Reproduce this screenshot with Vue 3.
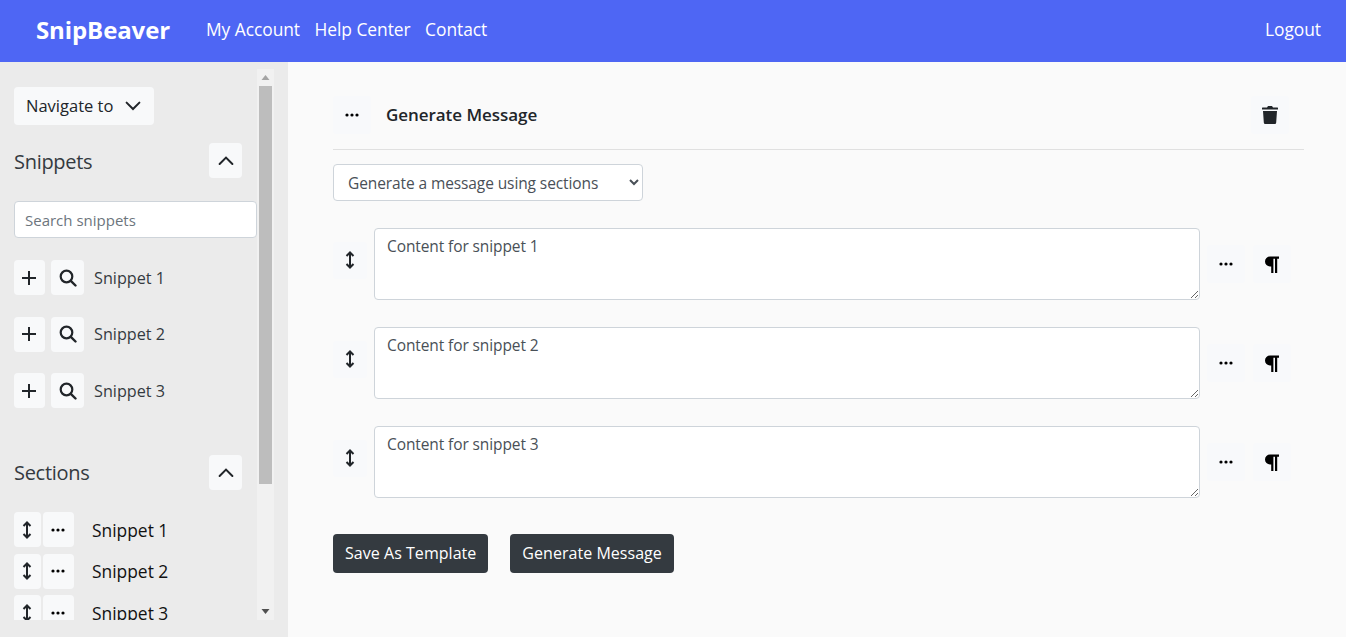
<script setup>
const snippets = ['Snippet 1', 'Snippet 2', 'Snippet 3']
</script>

<template>
  <div class="page">
    <header class="nav">
      <a class="brand">SnipBeaver</a>
      <nav class="links"><a>My Account</a><a>Help Center</a><a>Contact</a></nav>
      <a class="logout">Logout</a>
    </header>
    <div class="body">
      <aside class="side">
        <div class="panel">
          <div class="scroll">
            <button class="btn nav-to"><span>Navigate to</span>
              <svg width="16" height="16" viewBox="0 0 16 16"><path d="M1.600 4.600 8 11l6.400-6.400" fill="none" stroke="#212529" stroke-width="2" stroke-linecap="round"/></svg>
            </button>
            <div class="sec-head first">
              <h2>Snippets</h2>
              <button class="btn chev"><svg width="16" height="16" viewBox="0 0 16 16"><path d="M1.600 11 8 4.600l6.400 6.400" fill="none" stroke="#212529" stroke-width="2" stroke-linecap="round"/></svg></button>
            </div>
            <input class="search" placeholder="Search snippets" />
            <div class="snip-row" v-for="s in snippets" :key="s">
              <button class="btn plus"><svg width="16" height="16" viewBox="0 0 16 16"><path d="M8 1v14M1 8h14" stroke="#212529" stroke-width="2" fill="none"/></svg></button>
              <button class="btn mag"><svg width="18" height="18" viewBox="0 0 18 18"><circle cx="7.500" cy="7.500" r="5.800" fill="none" stroke="#212529" stroke-width="2.200"/><path d="m11.800 11.800 4.700 4.700" stroke="#212529" stroke-width="2.400" stroke-linecap="round"/></svg></button>
              <span>{{ s }}</span>
            </div>
            <div class="sec-head second">
              <h2>Sections</h2>
              <button class="btn chev"><svg width="16" height="16" viewBox="0 0 16 16"><path d="M1.600 11 8 4.600l6.400 6.400" fill="none" stroke="#212529" stroke-width="2" stroke-linecap="round"/></svg></button>
            </div>
            <div class="sect-row" v-for="s in snippets" :key="s">
              <button class="btn arrows"><svg width="10" height="18" viewBox="0 0 10 18"><path d="M5 1.500v15M1.500 5 5 1.500 8.500 5M1.500 13 5 16.500 8.500 13" fill="none" stroke="#212529" stroke-width="2"/></svg></button>
              <button class="btn dots"><svg width="16" height="16" viewBox="0 0 16 16"><circle cx="3" cy="8" r="1.600"/><circle cx="8" cy="8" r="1.600"/><circle cx="13" cy="8" r="1.600"/></svg></button>
              <span>{{ s }}</span>
            </div>
          </div>
          <div class="bar">
            <svg width="17" height="17" viewBox="0 0 17 17"><path d="M8.500 6 12.500 11h-8z" fill="#a3a3a3"/></svg>
            <div class="thumb"></div>
            <div class="bar-fill"></div>
            <svg width="17" height="17" viewBox="0 0 17 17"><path d="M8.500 11 12.500 6h-8z" fill="#505050"/></svg>
          </div>
        </div>
      </aside>
      <main class="main">
        <div class="title-row">
          <button class="ghost"><svg width="16" height="16" viewBox="0 0 16 16"><circle cx="3" cy="8" r="1.600"/><circle cx="8" cy="8" r="1.600"/><circle cx="13" cy="8" r="1.600"/></svg></button>
          <h1>Generate Message</h1>
          <button class="ghost trash"><svg width="16" height="18" viewBox="0 0 16 18" fill="#212529"><path d="M5 1.500 6 0h4l1 1.500h4.500a.5.5 0 0 1 .5.5v1.500H0V2a.5.5 0 0 1 .5-.5z"/><path d="M1 5h14l-.8 11.500a1.500 1.500 0 0 1-1.500 1.500H3.300a1.500 1.500 0 0 1-1.500-1.500z"/></svg></button>
        </div>
        <select class="mode"><option>Generate a message using sections</option></select>
        <div class="editor" v-for="n in 3" :key="n">
          <button class="ghost grip"><svg width="10" height="18" viewBox="0 0 10 18"><path d="M5 1.500v15M1.500 5 5 1.500 8.500 5M1.500 13 5 16.500 8.500 13" fill="none" stroke="#212529" stroke-width="2"/></svg></button>
          <textarea class="area" :value="`Content for snippet ${n}`"></textarea>
          <button class="ghost after"><svg width="16" height="16" viewBox="0 0 16 16"><circle cx="3" cy="8" r="1.600"/><circle cx="8" cy="8" r="1.600"/><circle cx="13" cy="8" r="1.600"/></svg></button>
          <button class="ghost para"><svg width="15" height="17" viewBox="0 0 15 17"><path d="M6 0.500H15v2.200h-1.800V17h-2.200V2.700H9.400V17H7.200V10.500H6a5 5 0 0 1 0-10z" fill="#000"/></svg></button>
        </div>
        <div class="actions">
          <button class="dark">Save As Template</button>
          <button class="dark">Generate Message</button>
        </div>
      </main>
    </div>
  </div>
</template>

<style>
html, body { margin: 0; height: 100%; overflow: hidden; }
</style>

<style scoped>
.page { width: 1346px; height: 637px; display: flex; flex-direction: column; font-family: "Open Sans", "Noto Sans", sans-serif; color: #212529; overflow: hidden; }
.nav { height: 62px; flex: none; box-sizing: border-box; background: #4e66f4; color: #fff; display: flex; align-items: center; padding: 0 25px 4px 36px; }
.brand { font-size: 24px; font-weight: 700; letter-spacing: -0.1px; width: 170px; }
.links { display: flex; gap: 14.500px; font-size: 17.400px; letter-spacing: -0.05px; flex: 1; }
.logout { font-size: 17.400px; letter-spacing: -0.05px; }
.body { flex: 1; display: flex; min-height: 0; }
.side { width: 288px; flex: none; background: #ebebeb; padding-top: 7px; box-sizing: border-box; }
.panel { width: 273px; height: 551px; display: flex; }
.scroll { width: 257px; flex: none; overflow: hidden; padding-left: 14px; box-sizing: border-box; }
.bar { width: 17px; background: #f1f1f1; display: flex; flex-direction: column; }
.bar svg { flex: none; }
.thumb { height: 398px; width: 13px; margin: 0 2px; background: #bdbdbd; flex: none; }
.bar-fill { flex: 1; }
.btn { border: 0; background: #f8f9fa; border-radius: 4px; padding: 0; display: inline-flex; align-items: center; justify-content: center; font: inherit; color: inherit; }
.nav-to { margin-top: 18px; width: 140px; height: 38px; font-size: 16.500px; justify-content: flex-start; padding-left: 12px; gap: 12px; box-sizing: border-box; }
.nav-to span { margin-bottom: 2px; }
.sec-head { display: flex; align-items: center; justify-content: space-between; width: 228px; }
.first { margin-top: 18px; }
.second { margin-top: 47px; }
h2 { margin: 0; font-size: 20px; font-weight: 400; letter-spacing: -0.3px; padding-top: 2px; color: #343a40; }
.second h2 { padding-top: 0; }
.chev { width: 33px; height: 35px; }
.search { display: block; width: 243px; height: 37px; margin-top: 23px; box-sizing: border-box; border: 1px solid #ced4da; border-radius: 4px; background: #fff; padding: 0 10px; font: inherit; font-size: 15px; color: #495057; outline: none; }
.search::placeholder { color: #6c757d; opacity: 1; }
.snip-row { display: flex; align-items: center; height: 35px; margin-top: 21.500px; font-size: 16.200px; color: #343a40; }
.search + .snip-row { margin-top: 22px; }
.plus { width: 31px; height: 35px; margin-right: 6px; }
.plus svg { margin-left: -2px; }
.mag { width: 33px; height: 35px; margin-right: 10px; }
.sect-row { display: flex; align-items: center; height: 35px; margin-bottom: 6.500px; font-size: 17.400px; color: #111; }
.second + .sect-row { margin-top: 22px; }
.arrows { width: 27px; height: 35px; margin-right: 2px; }
.arrows svg { margin-left: -1px; }
.dots { width: 31px; height: 35px; margin-right: 18px; }
.dots svg { margin-left: -2px; }
.main { flex: 1; background: #fafafa; padding: 31px 42px 0 45px; min-width: 0; }
.title-row { display: flex; align-items: center; height: 56px; border-bottom: 1px solid #e0e0e0; }
.ghost { border: 0; background: #f8f9fb; border-radius: 4px; padding: 0; display: inline-flex; align-items: center; justify-content: center; flex: none; }
.title-row .ghost { width: 38px; height: 38px; margin-bottom: 12px; }
h1 { margin: 0 0 14px 15px; font-size: 17px; font-weight: 600; letter-spacing: -0.05px; flex: 1; }
.trash { margin-right: 15px; }
.mode { display: block; width: 310px; height: 37px; margin-top: 14px; margin-bottom: 27px; border: 1px solid #ced4da; border-radius: 4px; background: #fff; font: inherit; font-size: 15.500px; letter-spacing: -0.1px; color: #495057; padding: 0 10px; }
.editor { display: flex; align-items: center; margin-bottom: 27px; height: 72px; }
.grip { width: 34px; height: 37px; margin-right: 7px; margin-bottom: 8px; }
.area { width: 826px; height: 72px; box-sizing: border-box; border: 1px solid #ced4da; border-radius: 4px; background: #fff; padding: 5px 12px; font: inherit; font-size: 15.500px; letter-spacing: -0.1px; line-height: 24px; color: #495057; resize: vertical; margin-right: 7px; outline: none; }
.after { width: 38px; height: 38px; margin-right: 8px; }
.para { width: 38px; height: 38px; }
.para svg { margin-left: -1px; }
.actions { display: flex; gap: 22px; margin-top: 36px; }
.dark { border: 0; background: #343a40; color: #fff; border-radius: 4px; height: 39px; padding: 0 12px 2px; font: inherit; font-size: 16px; letter-spacing: 0.04px; }
</style>
